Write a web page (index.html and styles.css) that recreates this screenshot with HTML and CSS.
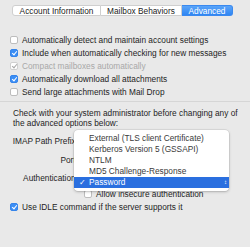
FILE: index.html
```html
<!DOCTYPE html>
<html>
<head>
<meta charset="utf-8">
<link rel="stylesheet" href="styles.css">
</head>
<body>
<div class="window">
  <div class="tabs">
    <div class="tab tab-account">Account Information</div>
    <div class="tab tab-mailbox">Mailbox Behaviors</div>
    <div class="tab tab-advanced active">Advanced</div>
  </div>

  <div class="options">
    <label class="check-row"><span class="box"></span>Automatically detect and maintain account settings</label>
    <label class="check-row"><span class="box checked"></span>Include when automatically checking for new messages</label>
    <label class="check-row disabled"><span class="box checked dim"></span>Compact mailboxes automatically</label>
    <label class="check-row"><span class="box checked"></span>Automatically download all attachments</label>
    <label class="check-row"><span class="box"></span>Send large attachments with Mail Drop</label>
  </div>

  <div class="separator"></div>

  <p class="notice">Check with your system administrator before changing any of the advanced options below:</p>

  <div class="form">
    <div class="form-row"><span class="form-label">IMAP Path Prefix:</span><span class="field"></span></div>
    <div class="form-row"><span class="form-label">Port:</span><span class="field"></span></div>
    <div class="form-row"><span class="form-label">Authentication:</span><span class="field"></span></div>
  </div>

  <label class="check-row sub"><span class="box"></span>Allow insecure authentication</label>
  <label class="check-row idle"><span class="box checked"></span>Use IDLE command if the server supports it</label>

  <div class="menu">
    <div class="menu-item">External (TLS client Certificate)</div>
    <div class="menu-item">Kerberos Version 5 (GSSAPI)</div>
    <div class="menu-item">NTLM</div>
    <div class="menu-item">MD5 Challenge-Response</div>
    <div class="menu-item selected"><span class="tick">&#x2713;</span>Password<span class="sel-arrows">&#x2195;</span></div>
  </div>
</div>
</body>
</html>
```

FILE: styles.css
```css
html, body {
  margin: 0;
  padding: 0;
}
body {
  background: #e9e9e9;
  font-family: "Liberation Sans", Arial, sans-serif;
  font-size: 8.3px;
  color: #1e1e1e;
  width: 250px;
  height: 247px;
  overflow: hidden;
}
.window {
  position: relative;
  width: 250px;
  height: 247px;
}
.tabs {
  display: flex;
  margin: 5px 0 0 12px;
  width: 221px;
  height: 11px;
  box-sizing: border-box;
}
.tab {
  display: flex;
  align-items: center;
  justify-content: center;
  background: #fff;
  border: 1px solid #cfcfcf;
  border-left: none;
  box-sizing: border-box;
  font-size: 8.3px;
  color: #222;
  white-space: nowrap;
}
.tab-account {
  width: 89px;
  border-left: 1px solid #cfcfcf;
  border-radius: 3px 0 0 3px;
}
.tab-mailbox { width: 81px; }
.tab-advanced { width: 51px; }
.tab.active {
  background: linear-gradient(#5aa4f9, #2f86f3);
  color: #fff;
  border-color: #3a89ef;
  border-radius: 0 3px 3px 0;
}
.options {
  display: flex;
  flex-direction: column;
  margin-top: 17px;
  padding-left: 10px;
}
.check-row {
  display: flex;
  align-items: center;
  height: 13px;
  white-space: nowrap;
}
.check-row.disabled { color: #a8a8a8; }
.box {
  width: 8px;
  height: 8px;
  box-sizing: border-box;
  border: 1px solid #bdbdbd;
  border-radius: 2px;
  background: #fff;
  margin-right: 4px;
  flex: none;
  position: relative;
}
.box.checked {
  background: #3b8ef5;
  border-color: #3584ea;
}
.box.checked::after {
  content: "";
  position: absolute;
  left: 2px;
  top: 0px;
  width: 2px;
  height: 4px;
  border: solid #fff;
  border-width: 0 1px 1px 0;
  transform: rotate(40deg);
}
.box.checked.dim {
  background: #fff;
  border-color: #d0d0d0;
}
.box.checked.dim::after { border-color: #a8a8a8; }
.separator {
  margin: 3px 0 0 0;
  height: 1px;
  background: #d6d6d6;
}
.notice {
  margin: 7px 0 0 13px;
  width: 232px;
  line-height: 9.5px;
}
.form {
  display: flex;
  flex-direction: column;
  margin-top: 4px;
}
.form-row {
  display: flex;
  align-items: center;
  height: 18.5px;
}
.form-label {
  width: 78px;
  text-align: right;
  flex: none;
  white-space: nowrap;
}
.field {
  display: block;
  width: 150px;
  height: 11px;
  margin-left: 4px;
}
.check-row.sub {
  padding-left: 84px;
}
.check-row.idle {
  padding-left: 10px;
}
.menu {
  position: absolute;
  left: 74px;
  top: 125px;
  width: 155px;
  padding: 3px 0;
  background: #fff;
  border-radius: 4px;
  box-shadow: 0 1px 3px rgba(0,0,0,0.22), 0 0 0 0.5px rgba(0,0,0,0.12);
}
.menu-item {
  height: 11px;
  line-height: 11px;
  padding-left: 15px;
  color: #3a3a3a;
  white-space: nowrap;
  position: relative;
}
.menu-item.selected {
  background: #2a6fdf;
  color: #fff;
}
.tick {
  position: absolute;
  left: 5px;
  top: 0;
}
.sel-arrows {
  position: absolute;
  right: 2px;
  top: 0;
  font-size: 6px;
}
```
